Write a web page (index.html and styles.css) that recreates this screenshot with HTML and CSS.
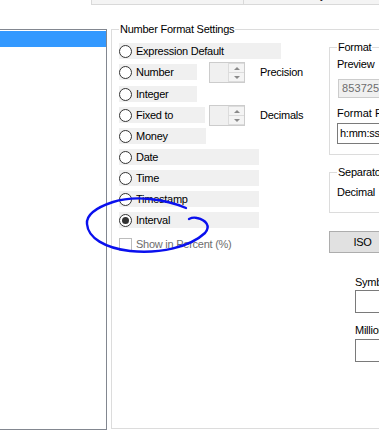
FILE: index.html
```html
<!DOCTYPE html>
<html lang="en">
<head>
    <meta charset="UTF-8">
    <meta name="viewport" content="width=device-width, initial-scale=1.0">
    <link rel="stylesheet" href="styles.css">
    <title>Number Format Settings</title>
</head>
<body>
    <div class="tabs">
        <div class="tab tab-first"></div>
        <div class="tab"><span class="tab-label">y</span></div>
    </div>

    <div class="dialog">
        <div class="listbox">
            <div class="list-item selected"></div>
        </div>

        <fieldset class="group main-group">
            <legend>Number Format Settings</legend>
            <div class="columns">
                <div class="option-list">
                    <div class="option option-full"><span class="radio"></span>Expression Default</div>
                    <div class="option-row number-row">
                        <div class="option option-short"><span class="radio"></span>Number</div>
                        <div class="spinner">
                            <div class="spinner-field"></div>
                            <div class="spinner-buttons">
                                <span class="spin-btn"><i class="arrow-up"></i></span>
                                <span class="spin-btn"><i class="arrow-down"></i></span>
                            </div>
                        </div>
                        <span class="spinner-label">Precision</span>
                    </div>
                    <div class="option option-short"><span class="radio"></span>Integer</div>
                    <div class="option-row">
                        <div class="option option-mid"><span class="radio"></span>Fixed to</div>
                        <div class="spinner">
                            <div class="spinner-field"></div>
                            <div class="spinner-buttons">
                                <span class="spin-btn"><i class="arrow-up"></i></span>
                                <span class="spin-btn"><i class="arrow-down"></i></span>
                            </div>
                        </div>
                        <span class="spinner-label">Decimals</span>
                    </div>
                    <div class="option option-money"><span class="radio"></span>Money</div>
                    <div class="option option-wide"><span class="radio"></span>Date</div>
                    <div class="option option-wide"><span class="radio"></span>Time</div>
                    <div class="option option-wide"><span class="radio"></span>Timestamp</div>
                    <div class="option option-wide"><span class="radio checked"></span>Interval</div>
                    <div class="check-option"><span class="checkbox"></span>Show in Percent (%)</div>
                </div>

                <div class="side">
                    <fieldset class="group format-group">
                        <legend>Format</legend>
                        <div class="field-label">Preview</div>
                        <div class="preview-box">85372536:00:00</div>
                        <div class="field-label pattern-label">Format Pattern</div>
                        <div class="text-input pattern-input">h:mm:ss</div>
                    </fieldset>

                    <fieldset class="group separator-group">
                        <legend>Separators</legend>
                        <div class="field-label">Decimal</div>
                    </fieldset>

                    <div class="button">ISO</div>

                    <div class="symbols">
                        <div class="field-label">Symbol</div>
                        <div class="text-input symbol-input"></div>
                        <div class="field-label millions-label">Millions</div>
                        <div class="text-input symbol-input"></div>
                    </div>
                </div>
            </div>
        </fieldset>
    </div>

    <!-- hand drawn marker ring around the Interval option -->
    <svg class="ink" width="379" height="444" viewBox="0 0 379 444">
        <path d="M186,208 C165,199 135,195 113,202 C95,208 86,215 87,224 C88,238 105,248 130,251 C160,254 190,247 205,233 C211,226 206,220 197,218 C193,217 191,218 189,219"
              fill="none" stroke="#0a10ee" stroke-width="2.4" stroke-linecap="round" stroke-linejoin="round"/>
    </svg>
</body>
</html>
```

FILE: styles.css
```css
body {
    margin: 0;
    width: 379px;
    height: 444px;
    overflow: hidden;
    position: relative;
    background-color: #ffffff;
    color: #000000;
    font-family: 'Liberation Sans', Arial, sans-serif;
    font-size: 11px;
    line-height: 13px;
    letter-spacing: -0.25px;
}

/* Tab strip cut off at the top */
.tabs {
    display: flex;
    height: 4px;
    margin-left: 91px;
    border-bottom: 1px solid #d9d9d9;
}

.tab {
    flex: 1;
    overflow: hidden;
    background-color: #f4f4f4;
    border-left: 1px solid #d9d9d9;
}

.tab-first {
    flex: 0 0 151px;
}

.tab-label {
    display: block;
    margin-top: -11px;
    margin-left: 76px;
}

.dialog {
    display: flex;
    align-items: flex-start;
    margin-top: 18px;
}

.listbox {
    flex: 0 0 auto;
    box-sizing: border-box;
    width: 107px;
    height: 401px;
    margin-top: 6px;
    padding-top: 1px;
    border: 1px solid #828790;
    border-left: none;
}

.list-item {
    height: 16px;
}

.list-item.selected {
    background-color: #3399ff;
}

/* Group boxes */
.group {
    margin: 0;
    min-width: 0;
    border: 1px solid #dcdcdc;
    padding: 0 0 0 7px;
}

.group legend {
    padding: 0 1px;
    line-height: 13px;
}

.main-group {
    flex: 0 0 auto;
    box-sizing: border-box;
    width: 400px;
    height: 406px;
    margin-left: 4px;
    padding-top: 7px;
}

.columns {
    display: flex;
}

.option-list {
    display: flex;
    flex-direction: column;
    gap: 5px;
    flex: 0 0 210px;
}

.option {
    display: flex;
    align-items: center;
    height: 16px;
    line-height: 16px;
    background-color: #f0f0f0;
    white-space: nowrap;
}

.option-full { width: 162px; }
.option-short { width: 78px; }
.option-mid { width: 86px; }
.option-money { width: 87px; }
.option-wide { width: 140px; }

.radio {
    position: relative;
    box-sizing: border-box;
    width: 13px;
    height: 13px;
    margin-right: 4px;
    border: 1px solid #333333;
    border-radius: 50%;
    background-color: #ffffff;
    flex: 0 0 auto;
}

.radio.checked::after {
    content: "";
    position: absolute;
    left: 2px;
    top: 2px;
    width: 7px;
    height: 7px;
    border-radius: 50%;
    background-color: #333333;
}

.option-row {
    display: grid;
    grid-template-columns: 90px 36px 1fr;
    grid-template-rows: 16px;
    align-items: start;
}

.number-row {
    margin-bottom: 1px;
}

.spinner {
    display: flex;
    box-sizing: border-box;
    width: 36px;
    height: 21px;
    margin-top: -2px;
    border: 1px solid #cccccc;
    background-color: #f0f0f0;
}

.spinner-field {
    flex: 1;
}

.spinner-buttons {
    display: flex;
    flex-direction: column;
    width: 16px;
}

.spin-btn {
    flex: 1;
    display: flex;
    align-items: center;
    justify-content: center;
    border: 1px solid #dcdcdc;
    border-right: none;
    background-color: #f4f4f4;
}

.spin-btn + .spin-btn {
    border-top: none;
}

.arrow-up,
.arrow-down {
    width: 0;
    height: 0;
    border-left: 3px solid transparent;
    border-right: 3px solid transparent;
}

.arrow-up {
    border-bottom: 3px solid #8a8a8a;
}

.arrow-down {
    border-top: 3px solid #8a8a8a;
}

.spinner-label {
    padding-left: 15px;
    line-height: 16px;
    white-space: nowrap;
}

.check-option {
    display: flex;
    align-items: center;
    height: 13px;
    margin-top: 5px;
    color: #6d6d6d;
    white-space: nowrap;
}

.checkbox {
    box-sizing: border-box;
    width: 13px;
    height: 13px;
    margin-right: 4px;
    border: 1px solid #bcbcbc;
    background-color: #ffffff;
}

/* Right column */
.side {
    display: flex;
    flex-direction: column;
    width: 200px;
    margin-top: -2px;
}

.format-group {
    width: 150px;
    padding-top: 4px;
    padding-bottom: 10px;
}

.field-label {
    white-space: nowrap;
}

.preview-box {
    box-sizing: border-box;
    width: 120px;
    height: 19px;
    margin-top: 8px;
    margin-left: 1px;
    padding: 2px 0 0 3px;
    border: 1px solid #cccccc;
    background-color: #f0f0f0;
    color: #6d6d6d;
    letter-spacing: 0.1px;
    white-space: nowrap;
}

.pattern-label {
    margin-top: 9px;
    letter-spacing: 0;
}

.text-input {
    box-sizing: border-box;
    width: 120px;
    border: 1px solid #7a7a7a;
    background-color: #ffffff;
    white-space: nowrap;
}

.pattern-input {
    height: 21px;
    margin-top: 3px;
    padding: 3px 0 0 2px;
}

.separator-group {
    width: 150px;
    margin-top: 11px;
    padding-top: 7px;
    padding-bottom: 13px;
}

.button {
    box-sizing: border-box;
    width: 67px;
    height: 22px;
    margin-top: 18px;
    border: 1px solid #adadad;
    background-color: #e1e1e1;
    text-align: center;
    line-height: 20px;
}

.symbols {
    margin-top: 23px;
    margin-left: 26px;
}

.symbol-input {
    height: 23px;
    margin-top: 1px;
}

.millions-label {
    margin-top: 11px;
}

.millions-label + .symbol-input {
    margin-top: 2px;
}

.ink {
    position: absolute;
    left: 0;
    top: 0;
    pointer-events: none;
}
```
